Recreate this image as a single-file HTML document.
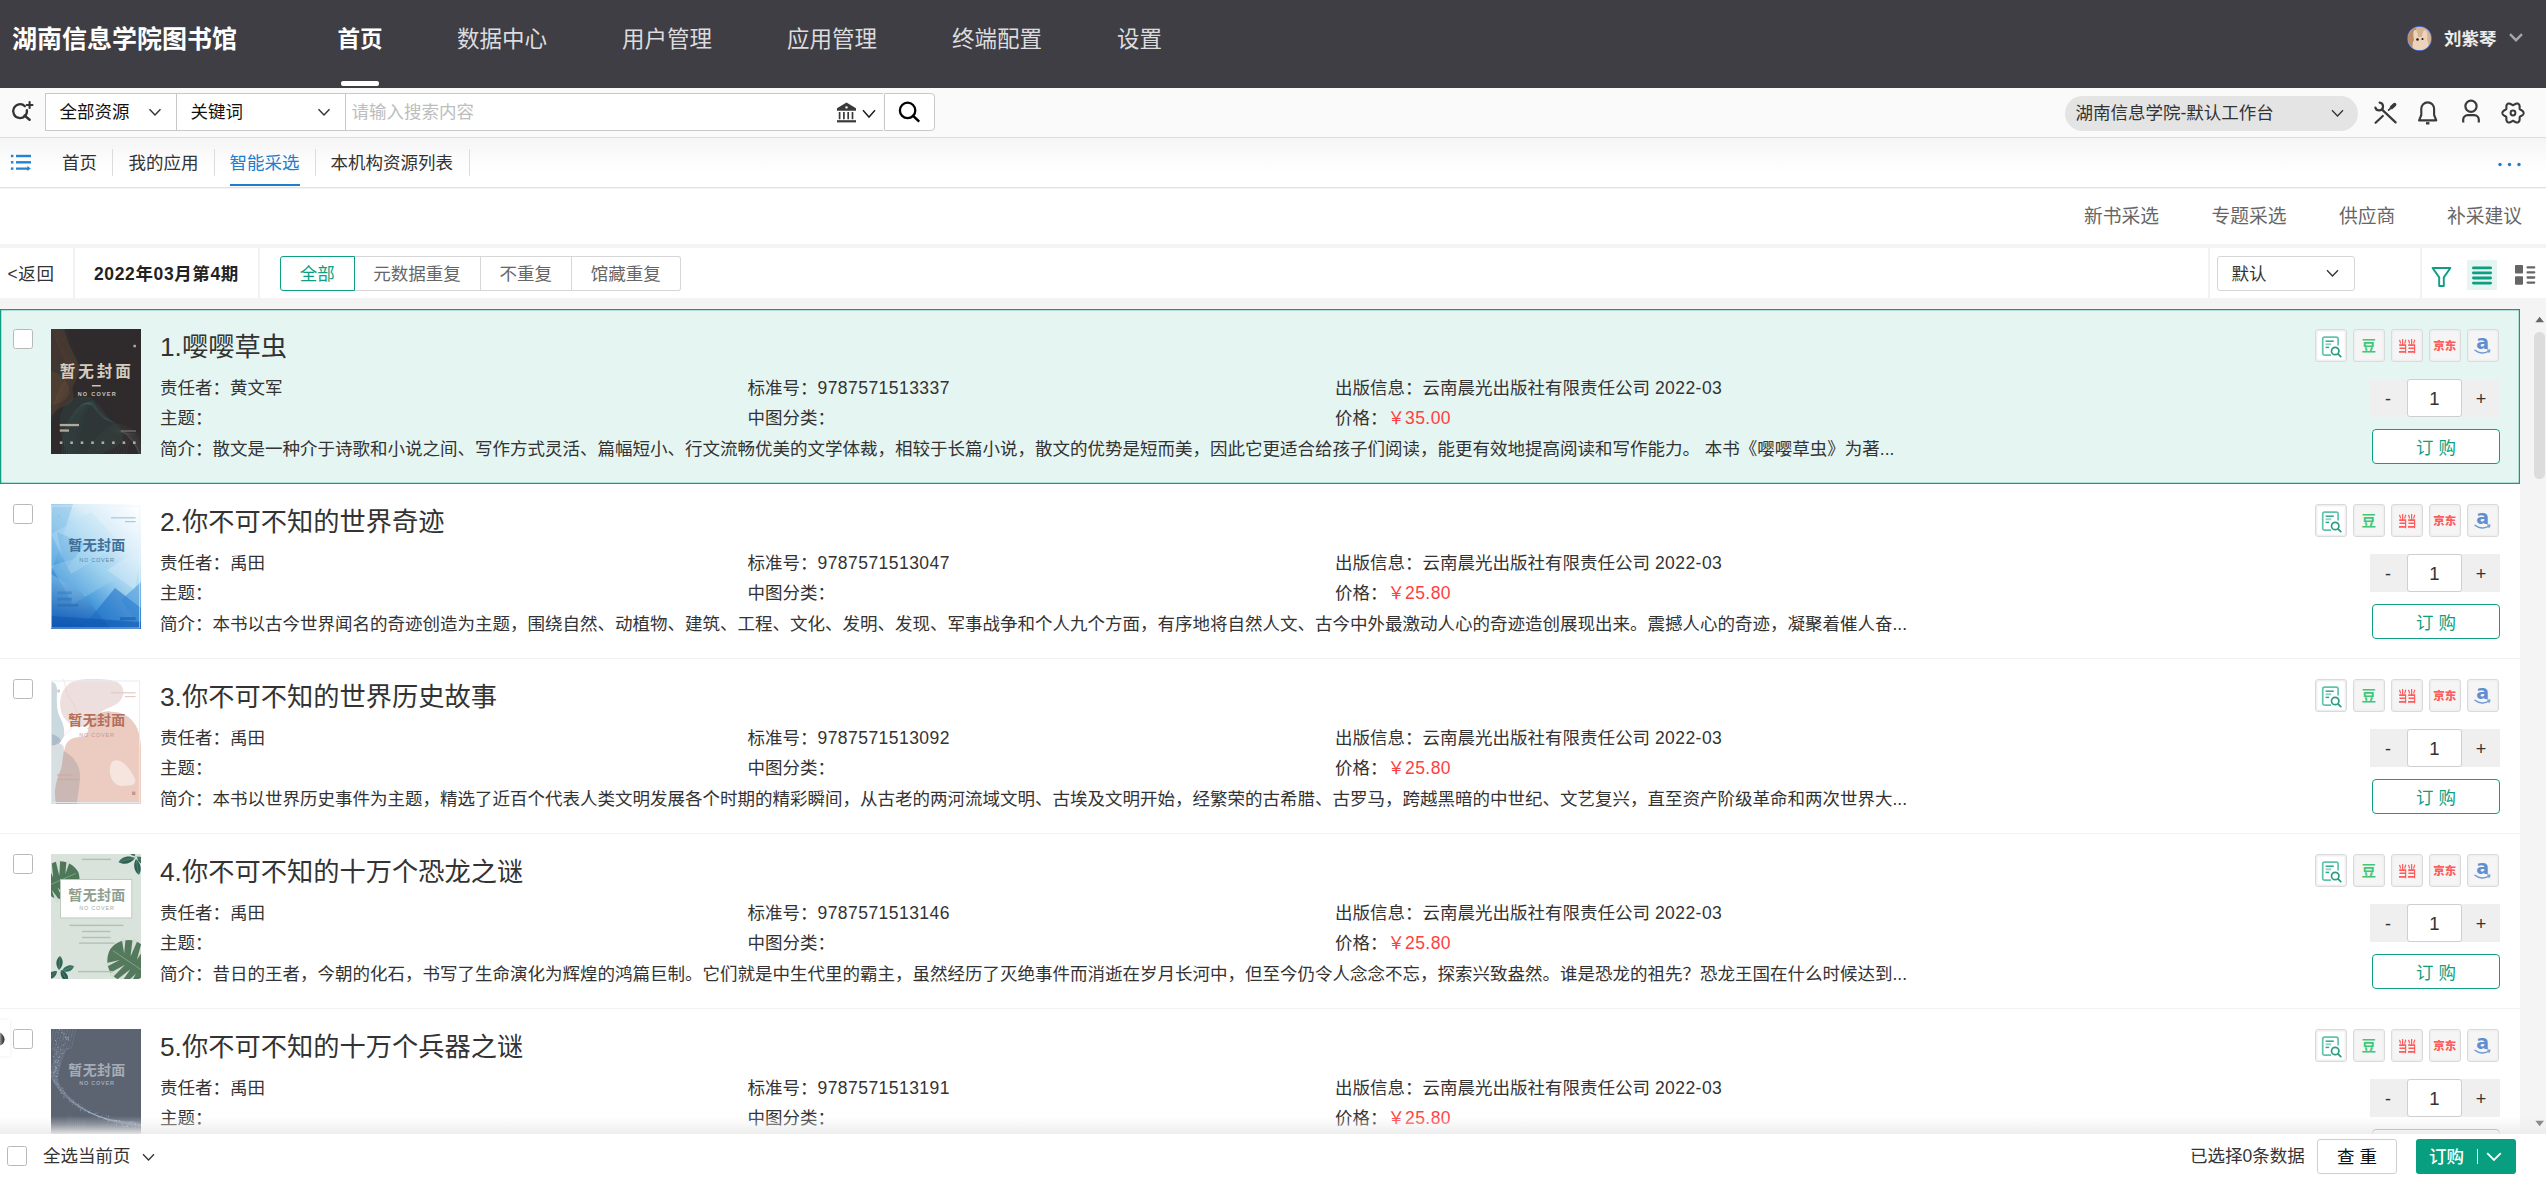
<!DOCTYPE html>
<html lang="zh-CN">
<head>
<meta charset="utf-8">
<title>湖南信息学院图书馆 - 智能采选</title>
<style>
*{box-sizing:border-box;margin:0;padding:0}
html,body{width:2546px;height:1179px;overflow:hidden}
body{position:relative;background:#f4f4f4;font-family:"Liberation Sans","Noto Sans CJK SC",sans-serif;font-size:17.5px;color:#333;line-height:1}
.abs{position:absolute}
svg{display:block;overflow:visible}
/* ---------- header ---------- */
#hdr{position:absolute;left:0;top:0;width:2546px;height:87.5px;background:#3f3e45}
#logo{position:absolute;left:12px;top:22px;font-size:25px;font-weight:700;color:#fff;line-height:35px;white-space:nowrap;letter-spacing:0}
.nav{position:absolute;top:23px;font-size:22.5px;line-height:34px;color:#dcdcde;white-space:nowrap}
.nav.on{color:#fff;font-weight:700}
#navline{position:absolute;left:341px;top:81px;width:37.5px;height:5px;border-radius:2px;background:#fff}
#avatar{position:absolute;left:2407px;top:26px;width:25px;height:25px;border-radius:50%;border:1.3px solid #4a7bff;background:radial-gradient(circle at 45% 55%,#e9cdb4 0,#d9b594 45%,#b98f6c 100%);overflow:hidden}
#uname{position:absolute;left:2444px;top:27px;font-size:17.5px;font-weight:700;color:#ececec;line-height:25px;white-space:nowrap}
/* ---------- search bar ---------- */
#sbar{position:absolute;left:0;top:87.5px;width:2546px;height:50px;background:#fafafa;border-bottom:1.25px solid #dcdcdc}
#sbox{position:absolute;left:45px;top:5.5px;width:838px;height:38px;background:#fff;border:1.25px solid #c9c9c9;border-right:0}
#sbox .sep{position:absolute;top:0;width:1.25px;height:100%;background:#c9c9c9}
#sbtn{position:absolute;left:884px;top:5.5px;width:51px;height:38px;background:#fff;border:1.25px solid #c9c9c9;border-radius:0 4px 4px 0}
.stxt{position:absolute;top:0;line-height:37.5px;color:#111;white-space:nowrap}
#wb{position:absolute;left:2065px;top:8.5px;width:293px;height:35px;border-radius:18px;background:#e4e4e4}
#wb span{position:absolute;left:10.5px;top:0;line-height:35.5px;color:#333;white-space:nowrap}
/* ---------- tabs ---------- */
#tabs{position:absolute;left:0;top:137.5px;width:2546px;height:50px;background:linear-gradient(#f5f5f5,#fcfcfc 45%,#fff 75%);border-bottom:1.25px solid #d9e3ee}
.tab{position:absolute;top:0;line-height:51px;color:#333;white-space:nowrap}
.tab.on{color:#1f7dcd}
.tsep{position:absolute;top:11px;width:1.25px;height:27px;background:#dcdcdc}
#tabline{position:absolute;left:229.5px;top:46px;width:70.5px;height:2.5px;background:#1f7dcd}
/* ---------- sub nav ---------- */
#sub{position:absolute;left:0;top:188.5px;width:2546px;height:55.5px;background:#fff}
#sub span{position:absolute;top:0;line-height:56px;font-size:18.75px;color:#666;white-space:nowrap}
/* ---------- toolbar ---------- */
#tool{position:absolute;left:0;top:247.5px;width:2546px;height:50.5px;background:#fff}
.vsep{position:absolute;top:0;width:2.5px;height:100%;background:#f2f1f6}
#tool .t{position:absolute;top:0;line-height:53px;white-space:nowrap;color:#333}
#bg{position:absolute;left:280px;top:8.5px;height:35px;display:flex}
#bg div{height:35px;line-height:34.5px;padding:0;text-align:center;border:1.25px solid #d6d6d6;border-left-width:0;color:#666;white-space:nowrap;background:#fff}
#bg div:first-child{border:1.25px solid #0e9f82;color:#0e9f82;border-radius:3px 0 0 3px}
#bg div:last-child{border-radius:0 3px 3px 0}
#sort{position:absolute;left:2217px;top:8.5px;width:137.5px;height:34.5px;border:1.25px solid #d6d6d6;border-radius:3px;background:#fff}
#sort span{position:absolute;left:13.5px;top:0;line-height:34px;color:#333}

/* ---------- list ---------- */
#list{position:absolute;left:0;top:309px;width:2520px;height:826px;background:#fff;overflow:hidden}
.item{position:absolute;left:0;width:2520px;height:175px;border-bottom:1.25px solid #f2f2f2;background:#fff}
.item.sel{background:#e5f5f2;border-bottom:0;box-shadow:inset 0 0 0 1.25px #0e9f82}
.cb{position:absolute;left:13px;top:19.7px;width:20px;height:20px;border:1.25px solid #b9b9b9;border-radius:2.5px;background:#fff}
.cover{position:absolute;left:51px;top:19.7px;width:90px;height:125px;overflow:hidden}
.ti{position:absolute;left:160px;top:20px;font-size:26.25px;line-height:36px;color:#333;white-space:nowrap}
.r{position:absolute;line-height:30px;white-space:nowrap;color:#333}
.r1{top:64px}.r2{top:94px}.r3{top:124.5px}
.pr{color:#ff4040}
.d{letter-spacing:.45px}
.ib{position:absolute;top:20.2px;width:31.7px;height:33px;border:1.25px solid #dadada;border-radius:3px;background:#f5f5f5;box-shadow:inset 0 0 0 1.4px #efefef}
.i1{left:2315.2px;background:#fff}.i2{left:2353.2px}.i3{left:2391.1px}.i4{left:2429.2px}.i5{left:2467.2px;width:32.3px}
.i1 svg{position:absolute;left:4.6px;top:5.8px}
.dou{position:absolute;left:0;top:1.9px;width:29.2px;text-align:center;font-size:14.5px;font-weight:700;line-height:28px;color:#3fc878}
.dd{position:absolute;left:-5.4px;top:2px;width:40px;text-align:center;font-size:14px;font-weight:700;line-height:28px;color:#ff5c5c;transform:scaleX(.66);letter-spacing:-0.5px}
.jd{position:absolute;left:-3.4px;top:1.8px;width:36px;text-align:center;font-size:11.5px;font-weight:900;line-height:29px;color:#ff5c5c;letter-spacing:0}
.am{position:absolute;left:0;top:-2.5px;width:29.2px;text-align:center;font-size:19px;font-weight:700;line-height:28px;color:#5f8fd2;font-family:"DejaVu Sans","Liberation Sans",sans-serif}
.sm{position:absolute;left:6px;top:18.5px}
.step{position:absolute;left:2370px;top:70px;width:130px;height:38px;background:#efefef}
.step .mi,.step .pl{position:absolute;top:0;line-height:40px;font-size:18px;color:#333;width:30px;text-align:center}
.step .mi{left:3px}.step .pl{left:96px}
.qty{position:absolute;left:37px;top:0;width:55px;height:38px;border:1.25px solid #cfcfcf;border-radius:3px;background:#fff;text-align:center;line-height:38px;font-size:18.5px;color:#333}
.buy{position:absolute;left:2372px;top:120px;width:128px;height:35px;border:1.6px solid #0e9f82;border-radius:4px;background:#fff;color:#0e9f82;text-align:center;line-height:37px;white-space:pre}
/* scrollbar */
#sthumb{position:absolute;left:2534px;top:332px;width:11px;height:147px;border-radius:6px;background:#dcdcdc}
/* ---------- bottom ---------- */
#bshadow{position:absolute;left:0;top:1116px;width:2546px;height:18px;background:linear-gradient(rgba(236,236,236,0),rgba(236,236,236,.35) 45%,rgba(236,236,236,.93))}
#bot{position:absolute;left:0;top:1134px;width:2546px;height:45px;background:#fff}
#bot .cb2{position:absolute;left:7px;top:12px;width:20px;height:20px;border:1.25px solid #b9b9b9;border-radius:2.5px;background:#fff}
#bot .t{position:absolute;top:0;line-height:45px;white-space:nowrap;color:#333}
#dup{position:absolute;left:2317px;top:5px;width:80px;height:34.6px;border:1.25px solid #cfcfcf;border-radius:3px;background:#fff;text-align:center;line-height:35px;color:#111;white-space:pre}
#order{position:absolute;left:2416px;top:5px;width:100px;height:34.6px;border-radius:3px;background:#089f80;color:#fff}
#order span{position:absolute;left:13px;top:0;line-height:37.5px;font-weight:500}
</style>
</head>
<body>

<!-- ================= HEADER ================= -->
<div id="hdr">
  <div id="logo">湖南信息学院图书馆</div>
  <div class="nav on" style="left:337.5px">首页</div>
  <div class="nav" style="left:457px">数据中心</div>
  <div class="nav" style="left:622px">用户管理</div>
  <div class="nav" style="left:787px">应用管理</div>
  <div class="nav" style="left:952px">终端配置</div>
  <div class="nav" style="left:1117px">设置</div>
  <div id="navline"></div>
  <div id="avatar">
    <svg width="25" height="25" viewBox="0 0 25 25">
      <rect width="25" height="25" fill="#d6b391"/>
      <path d="M0 0h8l-1 25H0z" fill="#b98e6b"/>
      <path d="M7 3c2 0 3 4 3 7l4 0c0-3 1-7 3-7c2 0 3 6 2 10c2 3 2 9 0 12H6c-2-3-2-9 0-12C5 9 5 3 7 3z" fill="#ecd3bb"/>
      <circle cx="9.5" cy="12.5" r="1.3" fill="#2a1c14"/><circle cx="14.5" cy="12" r="1.1" fill="#2a1c14"/>
    </svg>
  </div>
  <div id="uname">刘紫琴</div>
  <svg class="abs" style="left:2509px;top:33px" width="14" height="9" viewBox="0 0 14 9"><path d="M1 1.2L7 7.2L13 1.2" fill="none" stroke="#a6a6ab" stroke-width="2.4"/></svg>
</div>

<!-- ================= SEARCH BAR ================= -->
<div id="sbar">
  <svg class="abs" style="left:10px;top:10.7px" width="26" height="26" viewBox="0 0 26 26">
    <path d="M14.9 8.2A6.9 6.9 0 1 0 16.9 12.2" fill="none" stroke="#333" stroke-width="2.3" stroke-linecap="round"/>
    <path d="M14.6 17.6L19.6 21.8" stroke="#333" stroke-width="2.5" stroke-linecap="round"/>
    <path d="M16.7 7h5.8M19.6 4.1v5.8" stroke="#333" stroke-width="2.1" stroke-linecap="round"/>
  </svg>
  <div id="sbox">
    <span class="stxt" style="left:13.5px">全部资源</span>
    <svg class="abs" style="left:102px;top:14px" width="14" height="9" viewBox="0 0 14 9"><path d="M1.5 1.2L7 7L12.5 1.2" fill="none" stroke="#333" stroke-width="1.4"/></svg>
    <div class="sep" style="left:130px"></div>
    <span class="stxt" style="left:144.5px">关键词</span>
    <svg class="abs" style="left:271px;top:14px" width="14" height="9" viewBox="0 0 14 9"><path d="M1.5 1.2L7 7L12.5 1.2" fill="none" stroke="#333" stroke-width="1.4"/></svg>
    <div class="sep" style="left:299px"></div>
    <span class="stxt" style="left:305.5px;color:#bdbdbd">请输入搜索内容</span>
    <!-- bank icon -->
    <svg class="abs" style="left:790.4px;top:8px" width="21" height="21" viewBox="0 0 21 21">
      <path d="M10.5 0.6L20 6.2V8.8H1V6.2z" fill="#3a3a3a"/>
      <rect x="9.4" y="4.4" width="2.2" height="2" fill="#fff"/>
      <path d="M3.6 10v7.2M7.9 10v7.2M12.2 10v7.2M16.5 10v7.2" stroke="#3a3a3a" stroke-width="1.7"/>
      <rect x="1" y="18.2" width="19" height="2.2" fill="#3a3a3a"/>
    </svg>
    <svg class="abs" style="left:816px;top:15px" width="14" height="10" viewBox="0 0 14 10"><path d="M1 1.2L7 8L13 1.2" fill="none" stroke="#222" stroke-width="1.5"/></svg>
  </div>
  <div id="sbtn">
    <svg class="abs" style="left:11px;top:5px" width="28" height="28" viewBox="0 0 28 28"><circle cx="11.6" cy="11.4" r="7.7" fill="none" stroke="#000" stroke-width="2.3"/><path d="M17.2 17L22.3 21.7" stroke="#000" stroke-width="2.5" stroke-linecap="square"/></svg>
  </div>
  <div id="wb"><span>湖南信息学院-默认工作台</span>
    <svg class="abs" style="left:266px;top:13px" width="13" height="9" viewBox="0 0 13 9"><path d="M1 1.2L6.5 7L12 1.2" fill="none" stroke="#333" stroke-width="1.3"/></svg>
  </div>
  <!-- tools -->
  <svg class="abs" style="left:2373px;top:12px" width="26" height="26" viewBox="0 0 26 26" fill="none" stroke="#3a3a3a" stroke-width="2.2" stroke-linecap="round">
    <path d="M6.6 2.6A3.9 3.9 0 1 1 2.4 7.6"/><path d="M8.8 9.4L22.6 22.4"/><path d="M2.6 22.8L9.8 16"/><path d="M15.6 10.2L18.6 7.4" stroke-width="1.7"/><path d="M18.6 7.4L21.6 4.6" stroke-width="3.6"/>
  </svg>
  <!-- bell -->
  <svg class="abs" style="left:2415px;top:12px" width="26" height="26" viewBox="0 0 26 26" fill="none" stroke="#3a3a3a" stroke-width="2.1" stroke-linejoin="round">
    <path d="M6.3 8.8a6.4 6.4 0 0 1 12.8 0v6.2l2.2 5.4H4.1l2.2-5.4z"/><path d="M11 23.3h3.4" stroke-width="2.4"/>
  </svg>
  <!-- user -->
  <svg class="abs" style="left:2458px;top:10px" width="26" height="26" viewBox="0 0 26 26" fill="none" stroke="#3a3a3a" stroke-width="2.2">
    <circle cx="13" cy="8.2" r="5.6"/><path d="M5.2 24.4v-2.6a4.6 4.6 0 0 1 4.6-4.6h6.4a4.6 4.6 0 0 1 4.6 4.6v2.6"/>
  </svg>
  <!-- gear -->
  <svg class="abs" style="left:2500px;top:12.3px" width="26" height="26" viewBox="-13 -13 26 26" fill="none" stroke="#3a3a3a" stroke-width="2.1" stroke-linejoin="round">
    <path d="M10.60 0.00L10.55 0.46L10.40 0.91L10.16 1.34L9.84 1.74L9.46 2.10L9.03 2.42L8.59 2.71L8.14 2.96L7.71 3.19L7.32 3.42L7.00 3.64L6.75 3.90L6.65 4.24L6.62 4.64L6.62 5.08L6.64 5.57L6.64 6.08L6.61 6.61L6.55 7.14L6.42 7.65L6.24 8.13L5.99 8.55L5.67 8.91L5.30 9.18L4.88 9.37L4.41 9.46L3.92 9.47L3.42 9.39L2.91 9.24L2.42 9.03L1.95 8.79L1.50 8.53L1.09 8.28L0.70 8.05L0.34 7.88L0.00 7.80L-0.34 7.88L-0.70 8.05L-1.09 8.28L-1.50 8.53L-1.95 8.79L-2.42 9.03L-2.91 9.24L-3.42 9.39L-3.92 9.47L-4.41 9.46L-4.88 9.37L-5.30 9.18L-5.67 8.91L-5.99 8.55L-6.24 8.13L-6.42 7.65L-6.55 7.14L-6.61 6.61L-6.64 6.08L-6.64 5.57L-6.62 5.08L-6.62 4.64L-6.65 4.24L-6.75 3.90L-7.00 3.64L-7.32 3.42L-7.71 3.19L-8.14 2.96L-8.59 2.71L-9.03 2.42L-9.46 2.10L-9.84 1.74L-10.16 1.34L-10.40 0.91L-10.55 0.46L-10.60 0.00L-10.55 -0.46L-10.40 -0.91L-10.16 -1.34L-9.84 -1.74L-9.46 -2.10L-9.03 -2.42L-8.59 -2.71L-8.14 -2.96L-7.71 -3.19L-7.32 -3.42L-7.00 -3.64L-6.75 -3.90L-6.65 -4.24L-6.62 -4.64L-6.62 -5.08L-6.64 -5.57L-6.64 -6.08L-6.61 -6.61L-6.55 -7.14L-6.42 -7.65L-6.24 -8.13L-5.99 -8.55L-5.67 -8.91L-5.30 -9.18L-4.88 -9.37L-4.41 -9.46L-3.92 -9.47L-3.42 -9.39L-2.91 -9.24L-2.42 -9.03L-1.95 -8.79L-1.50 -8.53L-1.09 -8.28L-0.70 -8.05L-0.34 -7.88L-0.00 -7.80L0.34 -7.88L0.70 -8.05L1.09 -8.28L1.50 -8.53L1.95 -8.79L2.42 -9.03L2.91 -9.24L3.42 -9.39L3.92 -9.47L4.41 -9.46L4.88 -9.37L5.30 -9.18L5.67 -8.91L5.99 -8.55L6.24 -8.13L6.42 -7.65L6.55 -7.14L6.61 -6.61L6.64 -6.08L6.64 -5.57L6.62 -5.08L6.62 -4.64L6.65 -4.24L6.75 -3.90L7.00 -3.64L7.32 -3.42L7.71 -3.19L8.14 -2.96L8.59 -2.71L9.03 -2.42L9.46 -2.10L9.84 -1.74L10.16 -1.34L10.40 -0.91L10.55 -0.46Z"/>
    <circle cx="0" cy="0" r="2.4" stroke-width="2"/>
  </svg>
</div>

<!-- ================= TABS ================= -->
<div id="tabs">
  <svg class="abs" style="left:10px;top:15.6px" width="22" height="18" viewBox="0 0 22 18" fill="#2583d3">
    <rect x="0.9" y="1.8" width="2.5" height="2.4"/><rect x="6" y="1.8" width="15" height="2.4"/>
    <rect x="0.9" y="8.1" width="2.5" height="2.4"/><rect x="6" y="8.1" width="15" height="2.4"/>
    <rect x="0.9" y="14.4" width="2.5" height="2.4"/><path d="M6 14.4h11.4v-1.3l3.4 2.5l-3.4 2.5v-1.3H6z"/>
  </svg>
  <span class="tab" style="left:62px">首页</span><div class="tsep" style="left:112px"></div>
  <span class="tab" style="left:128.5px">我的应用</span><div class="tsep" style="left:214px"></div>
  <span class="tab on" style="left:229.5px">智能采选</span><div class="tsep" style="left:315px"></div>
  <span class="tab" style="left:330.5px">本机构资源列表</span><div class="tsep" style="left:469px"></div>
  <div id="tabline"></div>
  <svg class="abs" style="left:2497px;top:24px" width="26" height="5" viewBox="0 0 26 5" fill="#1f7dcd"><circle cx="3" cy="2.5" r="1.7"/><circle cx="12.5" cy="2.5" r="1.7"/><circle cx="22" cy="2.5" r="1.7"/></svg>
</div>

<!-- ================= SUB NAV ================= -->
<div id="sub">
  <span style="left:2084px">新书采选</span>
  <span style="left:2211.5px">专题采选</span>
  <span style="left:2339px">供应商</span>
  <span style="left:2447px">补采建议</span>
</div>

<!-- ================= TOOLBAR ================= -->
<div id="tool">
  <span class="t" style="left:7.5px;letter-spacing:.6px">&lt;返回</span>
  <div class="vsep" style="left:72.5px"></div>
  <span class="t" style="left:94px;font-weight:700;color:#222;letter-spacing:.62px">2022年03月第4期</span>
  <div class="vsep" style="left:257.5px"></div>
  <div id="bg"><div style="width:74.6px">全部</div><div style="width:126px">元数据重复</div><div style="width:91.5px">不重复</div><div style="width:108.5px">馆藏重复</div></div>
  <div class="vsep" style="left:2207.5px"></div>
  <div id="sort"><span>默认</span>
    <svg class="abs" style="left:108px;top:12px" width="13" height="9" viewBox="0 0 13 9"><path d="M1 1.2L6.5 7L12 1.2" fill="none" stroke="#333" stroke-width="1.3"/></svg>
  </div>
  <div class="vsep" style="left:2419.5px"></div>
  <!-- filter -->
  <svg class="abs" style="left:2431px;top:18px" width="21" height="22" viewBox="0 0 21 22" fill="none" stroke="#0e9f82" stroke-width="1.9" stroke-linejoin="round"><path d="M1.6 2h17.8l-6.6 9.4v8.6h-4.6v-8.6z"/></svg>
  <!-- list view (active) -->
  <div class="abs" style="left:2467px;top:12.5px;width:30px;height:30px;background:#e6f5f2"></div>
  <svg class="abs" style="left:2472px;top:18px" width="20" height="19" viewBox="0 0 20 19" stroke="#0e9f82" stroke-width="2.8" stroke-linecap="round"><path d="M1.4 1.9h17.2M1.4 6.95h17.2M1.4 12h17.2M1.4 17.1h17.2"/></svg>
  <!-- grid view -->
  <svg class="abs" style="left:2515px;top:17.5px" width="21" height="20" viewBox="0 0 21 20"><rect x="0" y="0" width="8" height="8.5" rx="0.8" fill="#666"/><rect x="0" y="11.3" width="8" height="8.5" rx="0.8" fill="#666"/><path d="M12.6 2.4h6.6M12.6 7.4h6.6M12.6 12.5h6.6M12.6 17.6h6.6" stroke="#666" stroke-width="2.3" stroke-linecap="round"/></svg>
</div>

<!--LIST-->
<div id="list">
<div class="item sel" style="top:0px">
  <div class="cb"></div>
  <div class="cover c1"><svg width="90" height="125" viewBox="0 0 90 125"><rect width="90" height="125" fill="#2f2b2d"/><path d="M0 0H13C16 8 18 16 22 24C26 32 30 36 28 44C26 52 20 56 22 64C24 70 20 76 12 78C6 80 2 84 0 88z" fill="#5b4535" opacity=".42"/><path d="M0 42C8 44 14 50 18 58C20 64 16 72 8 74L0 76z" fill="#6a4f38" opacity=".35"/><path d="M2.0 0C6.0 12 10.0 22 14.0 30C18.0 40 16.0 50 10.0 58C6.0 66 4.0 74 0 80.0" fill="none" stroke="#8a6848" stroke-width="0.35" opacity="0.50"/><path d="M4.2 0C8.2 12 12.2 22 15.8 30C19.3 40 17.1 50 11.3 58C7.1 66 4.9 74 0 82.2" fill="none" stroke="#8a6848" stroke-width="0.35" opacity="0.45"/><path d="M6.4 0C10.4 12 14.4 22 17.5 30C20.6 40 18.2 50 12.6 58C8.2 66 5.8 74 0 84.4" fill="none" stroke="#8a6848" stroke-width="0.35" opacity="0.40"/><path d="M8.6 0C12.6 12 16.6 22 19.3 30C22.0 40 19.3 50 14.0 58C9.3 66 6.6 74 0 86.6" fill="none" stroke="#8a6848" stroke-width="0.35" opacity="0.35"/><path d="M10.8 0C14.8 12 18.8 22 21.0 30C23.3 40 20.4 50 15.3 58C10.4 66 7.5 74 0 88.8" fill="none" stroke="#8a6848" stroke-width="0.35" opacity="0.30"/><path d="M13.0 0C17.0 12 21.0 22 22.8 30C24.6 40 21.5 50 16.6 58C11.5 66 8.4 74 0 91.0" fill="none" stroke="#8a6848" stroke-width="0.35" opacity="0.25"/><path d="M15.2 0C19.2 12 23.2 22 24.6 30C25.9 40 22.6 50 17.9 58C12.6 66 9.3 74 0 93.2" fill="none" stroke="#8a6848" stroke-width="0.35" opacity="0.20"/><path d="M10 84C14 72 26 64 38 68C48 72 44 84 52 88C62 92 70 96 72 106C74 116 60 120 50 125H16C12 112 6 98 10 84z" fill="#2f5250" opacity=".28"/><path d="M12.0 125C10.0 108.0 16.0 88.0 30.0 76.0C42.0 70.0 44.0 84.0 54.0 90.0" fill="none" stroke="#4f8580" stroke-width="0.35" opacity="0.55"/><path d="M13.8 125C11.8 107.5 17.8 87.1 31.4 75.5C43.1 70.7 44.9 84.5 55.3 90.5" fill="none" stroke="#4f8580" stroke-width="0.35" opacity="0.52"/><path d="M15.6 125C13.6 106.9 19.6 86.2 32.9 74.9C44.2 71.4 45.8 85.1 56.5 91.1" fill="none" stroke="#4f8580" stroke-width="0.35" opacity="0.48"/><path d="M17.4 125C15.4 106.4 21.4 85.3 34.3 74.4C45.2 72.2 46.7 85.6 57.8 91.6" fill="none" stroke="#4f8580" stroke-width="0.35" opacity="0.45"/><path d="M19.2 125C17.2 105.8 23.2 84.4 35.8 73.8C46.3 72.9 47.6 86.2 59.0 92.2" fill="none" stroke="#4f8580" stroke-width="0.35" opacity="0.41"/><path d="M21.0 125C19.0 105.3 25.0 83.5 37.2 73.3C47.4 73.6 48.5 86.7 60.3 92.7" fill="none" stroke="#4f8580" stroke-width="0.35" opacity="0.38"/><path d="M22.8 125C20.8 104.8 26.8 82.6 38.6 72.8C48.5 74.3 49.4 87.2 61.6 93.2" fill="none" stroke="#4f8580" stroke-width="0.35" opacity="0.34"/><path d="M24.6 125C22.6 104.2 28.6 81.7 40.1 72.2C49.6 75.0 50.3 87.8 62.8 93.8" fill="none" stroke="#4f8580" stroke-width="0.35" opacity="0.31"/><path d="M26.4 125C24.4 103.7 30.4 80.8 41.5 71.7C50.6 75.8 51.2 88.3 64.1 94.3" fill="none" stroke="#4f8580" stroke-width="0.35" opacity="0.27"/><path d="M28.2 125C26.2 103.1 32.2 79.9 43.0 71.1C51.7 76.5 52.1 88.9 65.3 94.9" fill="none" stroke="#4f8580" stroke-width="0.35" opacity="0.23"/><path d="M36.0 125C44.0 112.0 52.0 100.0 62.0 96.0S84.0 104.0 92 108.0" fill="none" stroke="#8a8f8c" stroke-width="0.3" opacity=".38"/><path d="M38.6 125C46.3 111.5 54.1 99.7 63.8 97.3S84.5 106.6 92 110.6" fill="none" stroke="#8a8f8c" stroke-width="0.3" opacity=".38"/><path d="M41.2 125C48.7 111.0 56.2 99.5 65.6 98.6S85.0 109.2 92 113.2" fill="none" stroke="#8a8f8c" stroke-width="0.3" opacity=".38"/><path d="M43.8 125C51.0 110.4 58.2 99.2 67.5 99.9S85.6 111.8 92 115.8" fill="none" stroke="#8a8f8c" stroke-width="0.3" opacity=".38"/><path d="M46.4 125C53.4 109.9 60.3 99.0 69.3 101.2S86.1 114.4 92 118.4" fill="none" stroke="#8a8f8c" stroke-width="0.3" opacity=".38"/><path d="M49.0 125C55.7 109.4 62.4 98.7 71.1 102.5S86.6 117.0 92 121.0" fill="none" stroke="#8a8f8c" stroke-width="0.3" opacity=".38"/><path d="M51.6 125C58.0 108.9 64.5 98.4 72.9 103.8S87.1 119.6 92 123.6" fill="none" stroke="#8a8f8c" stroke-width="0.3" opacity=".38"/><path d="M54.2 125C60.4 108.4 66.6 98.2 74.7 105.1S87.6 122.2 92 126.2" fill="none" stroke="#8a8f8c" stroke-width="0.3" opacity=".38"/><path d="M56.8 125C62.7 107.8 68.6 97.9 76.6 106.4S88.2 124.8 92 128.8" fill="none" stroke="#8a8f8c" stroke-width="0.3" opacity=".38"/><path d="M59.4 125C65.1 107.3 70.7 97.7 78.4 107.7S88.7 127.4 92 131.4" fill="none" stroke="#8a8f8c" stroke-width="0.3" opacity=".38"/><path d="M62.0 125C67.4 106.8 72.8 97.4 80.2 109.0S89.2 130.0 92 134.0" fill="none" stroke="#8a8f8c" stroke-width="0.3" opacity=".38"/><path d="M64.6 125C69.7 106.3 74.9 97.1 82.0 110.3S89.7 132.6 92 136.6" fill="none" stroke="#8a8f8c" stroke-width="0.3" opacity=".38"/><path d="M67.2 125C72.1 105.8 77.0 96.9 83.8 111.6S90.2 135.2 92 139.2" fill="none" stroke="#8a8f8c" stroke-width="0.3" opacity=".38"/><path d="M69.8 125C74.4 105.2 79.0 96.6 85.7 112.9S90.8 137.8 92 141.8" fill="none" stroke="#8a8f8c" stroke-width="0.3" opacity=".38"/><path d="M72.4 125C76.8 104.7 81.1 96.4 87.5 114.2S91.3 140.4 92 144.4" fill="none" stroke="#8a8f8c" stroke-width="0.3" opacity=".38"/><path d="M75.0 125C79.1 104.2 83.2 96.1 89.3 115.5S91.8 143.0 92 147.0" fill="none" stroke="#8a8f8c" stroke-width="0.3" opacity=".38"/><text x="45.8" y="47.9" font-size="15.6" font-weight="700" fill="#d6cbbd" letter-spacing="2.9" text-anchor="middle" font-family="Liberation Sans, Noto Sans CJK SC, sans-serif" >暂无封面</text><rect x="40.9" y="56" width="8.9" height="1.5" fill="#cfc4b6"/><text x="46.3" y="66.8" font-size="5.5" font-weight="700" fill="#cdc3b6" letter-spacing="1.25" text-anchor="middle" font-family="Liberation Sans, Noto Sans CJK SC, sans-serif" >NO COVER</text><rect x="8.8" y="94.9" width="19.2" height="2.3" fill="#b3a99d"/><rect x="8.8" y="100.4" width="9.2" height="2.3" fill="#b3a99d"/><rect x="69.9" y="101.5" width="15.1" height="1" fill="#8f877e"/><rect x="8.8" y="112.4" width="2.6" height="2.6" fill="#b5aa9c"/><rect x="19.3" y="112.4" width="2.6" height="2.6" fill="#b5aa9c"/><rect x="29.7" y="112.4" width="2.6" height="2.6" fill="#b5aa9c"/><rect x="40.2" y="112.4" width="2.6" height="2.6" fill="#b5aa9c"/><rect x="50.6" y="112.4" width="2.6" height="2.6" fill="#b5aa9c"/><rect x="61.1" y="112.4" width="2.6" height="2.6" fill="#b5aa9c"/><rect x="71.6" y="112.4" width="2.6" height="2.6" fill="#b5aa9c"/><rect x="82.0" y="112.4" width="2.6" height="2.6" fill="#b5aa9c"/><rect x="82.4" y="15.8" width="2.5" height="2.5" fill="#b5aa9c"/></svg></div>
  <div class="ti">1.嘤嘤草虫</div>
  <div class="r r1" style="left:160px">责任者：黄文军</div>
  <div class="r r1" style="left:747.5px">标准号：<span class="d">9787571513337</span></div>
  <div class="r r1" style="left:1335px">出版信息：云南晨光出版社有限责任公司 <span class="d">2022-03</span></div>
  <div class="r r2" style="left:160px">主题：</div>
  <div class="r r2" style="left:747.5px">中图分类：</div>
  <div class="r r2" style="left:1335px">价格：<span class="pr">￥<span class="d">35.00</span></span></div>
  <div class="r r3" style="left:160px">简介：散文是一种介于诗歌和小说之间、写作方式灵活、篇幅短小、行文流畅优美的文学体裁，相较于长篇小说，散文的优势是短而美，因此它更适合给孩子们阅读，能更有效地提高阅读和写作能力。 本书《嘤嘤草虫》为著...</div>
  <div class="ib i1"><svg width="21" height="21" viewBox="0 0 21 21" fill="none"><path d="M10 19.2H3.6A1.9 1.9 0 0 1 1.7 17.3V3.1A1.9 1.9 0 0 1 3.6 1.2H15.2A1.9 1.9 0 0 1 17.1 3.1V9.4" stroke="#62c3ab" stroke-width="1.7"/><path d="M4.6 5.2H12.8" stroke="#2fa78c" stroke-width="1.5"/><path d="M4.6 8.3H10.2" stroke="#8ed3c1" stroke-width="1.9"/><path d="M4.6 11.4H8.2" stroke="#2fa78c" stroke-width="1.5"/><circle cx="14.2" cy="15" r="3.7" stroke="#2a9d84" stroke-width="1.7"/><path d="M17 17.9L19.8 20.6" stroke="#2a9d84" stroke-width="1.8" stroke-linecap="round"/></svg></div><div class="ib i2"><span class="dou">豆</span></div><div class="ib i3"><span class="dd">当当</span></div><div class="ib i4"><span class="jd">京东</span></div><div class="ib i5"><span class="am">a</span><svg class="sm" width="17" height="6" viewBox="0 0 17 6" fill="none"><path d="M1 1.2C5 4.6 11 4.8 15.2 2" stroke="#6f9ad6" stroke-width="1.5" stroke-linecap="round"/><path d="M13.4 0.9L16 1.3L15 3.6" stroke="#6f9ad6" stroke-width="1.1" stroke-linecap="round"/></svg></div>
  <div class="step"><span class="mi">-</span><div class="qty">1</div><span class="pl">+</span></div>
  <div class="buy">订 购</div>
</div>
<div class="item" style="top:175px">
  <div class="cb"></div>
  <div class="cover c2"><svg width="90" height="125" viewBox="0 0 90 125"><defs><linearGradient id="g2" x1="0.9" y1="0" x2="0.25" y2="1"><stop offset="0" stop-color="#fdfeff"/><stop offset=".28" stop-color="#d9edf8"/><stop offset=".52" stop-color="#9dd0ee"/><stop offset=".75" stop-color="#4a9bdb"/><stop offset="1" stop-color="#1460bb"/></linearGradient><linearGradient id="g2b" x1="0" y1="0" x2="0" y2="1"><stop offset="0" stop-color="#8cc6ea" stop-opacity=".55"/><stop offset="1" stop-color="#0d58b4" stop-opacity=".75"/></linearGradient></defs><rect width="90" height="125" fill="url(#g2)"/><path d="M0 0H22L0 70z" fill="#7ebde6" opacity=".45"/><path d="M0 30L40 8L70 40L20 70z" fill="#bfe1f5" opacity=".35"/><path d="M6 28L34 40L14 66z" fill="#5aa6dd" opacity=".3"/><path d="M0 62L38 50L66 74L22 100z" fill="#a5d6f1" opacity=".35"/><path d="M90 44L56 66L84 86z" fill="#e1f2fb" opacity=".35"/><path d="M0 70V125H60L30 88z" fill="url(#g2b)"/><path d="M30 125L64 84L90 104V125z" fill="#1b6cc4" opacity=".55"/><path d="M90 78L70 96L90 125z" fill="#2f86d2" opacity=".45"/><path d="M0 112L90 118V125H0z" fill="#0c54b0" opacity=".55"/><rect x="0.5" y="2" width="88" height="122" fill="none" stroke="#e9f3fa" stroke-width="0.8" opacity=".7"/><text x="46" y="45.6" font-size="14" font-weight="700" fill="#3f7099" letter-spacing="0.35" text-anchor="middle" font-family="Liberation Sans, Noto Sans CJK SC, sans-serif" >暂无封面</text><text x="46" y="57.6" font-size="5.5" font-weight="400" fill="#5a86a8" letter-spacing="0.75" text-anchor="middle" font-family="Liberation Sans, Noto Sans CJK SC, sans-serif" >NO COVER</text><rect x="60" y="13.2" width="24.6" height="1.2" fill="#a9c8dd"/><rect x="74" y="17" width="10.6" height="1.2" fill="#a9c8dd"/><rect x="6.3" y="10.6" width="2.8" height="2.8" fill="#9fc3dc" opacity=".8"/><rect x="6.3" y="87.5" width="14.5" height="2.8" fill="#3a7fc2" opacity=".6"/><rect x="6.3" y="93.7" width="14.5" height="2.8" fill="#2f74b9" opacity=".6"/><rect x="6.3" y="99.9" width="21" height="2.8" fill="#2a6ab0" opacity=".6"/><rect x="69" y="113.2" width="15.6" height="3" fill="#0f56ab" opacity=".55"/></svg></div>
  <div class="ti">2.你不可不知的世界奇迹</div>
  <div class="r r1" style="left:160px">责任者：禹田</div>
  <div class="r r1" style="left:747.5px">标准号：<span class="d">9787571513047</span></div>
  <div class="r r1" style="left:1335px">出版信息：云南晨光出版社有限责任公司 <span class="d">2022-03</span></div>
  <div class="r r2" style="left:160px">主题：</div>
  <div class="r r2" style="left:747.5px">中图分类：</div>
  <div class="r r2" style="left:1335px">价格：<span class="pr">￥<span class="d">25.80</span></span></div>
  <div class="r r3" style="left:160px">简介：本书以古今世界闻名的奇迹创造为主题，围绕自然、动植物、建筑、工程、文化、发明、发现、军事战争和个人九个方面，有序地将自然人文、古今中外最激动人心的奇迹造创展现出来。震撼人心的奇迹，凝聚着催人奋...</div>
  <div class="ib i1"><svg width="21" height="21" viewBox="0 0 21 21" fill="none"><path d="M10 19.2H3.6A1.9 1.9 0 0 1 1.7 17.3V3.1A1.9 1.9 0 0 1 3.6 1.2H15.2A1.9 1.9 0 0 1 17.1 3.1V9.4" stroke="#62c3ab" stroke-width="1.7"/><path d="M4.6 5.2H12.8" stroke="#2fa78c" stroke-width="1.5"/><path d="M4.6 8.3H10.2" stroke="#8ed3c1" stroke-width="1.9"/><path d="M4.6 11.4H8.2" stroke="#2fa78c" stroke-width="1.5"/><circle cx="14.2" cy="15" r="3.7" stroke="#2a9d84" stroke-width="1.7"/><path d="M17 17.9L19.8 20.6" stroke="#2a9d84" stroke-width="1.8" stroke-linecap="round"/></svg></div><div class="ib i2"><span class="dou">豆</span></div><div class="ib i3"><span class="dd">当当</span></div><div class="ib i4"><span class="jd">京东</span></div><div class="ib i5"><span class="am">a</span><svg class="sm" width="17" height="6" viewBox="0 0 17 6" fill="none"><path d="M1 1.2C5 4.6 11 4.8 15.2 2" stroke="#6f9ad6" stroke-width="1.5" stroke-linecap="round"/><path d="M13.4 0.9L16 1.3L15 3.6" stroke="#6f9ad6" stroke-width="1.1" stroke-linecap="round"/></svg></div>
  <div class="step"><span class="mi">-</span><div class="qty">1</div><span class="pl">+</span></div>
  <div class="buy">订 购</div>
</div>
<div class="item" style="top:350px">
  <div class="cb"></div>
  <div class="cover c3"><svg width="90" height="125" viewBox="0 0 90 125"><rect width="90" height="125" fill="#fff"/><path d="M19 4C30 -2 55 -1 66 3C76 8 74 22 62 27C52 31 48 33 42 42C36 50 22 50 14 40C6 30 8 12 19 4z" fill="#ecdfde"/><path d="M0 3C4 3 6 6 6 12C6 20 5 28 8 36C12 44 14 50 13 56C12 62 6 66 0 67z" fill="#cad9dd"/><path d="M0 55C6 56 10 60 10 62C8 66 4 67 0 67z" fill="#a9bcc8"/><path d="M0 67C6 66 12 62 13 70L12 125H0z" fill="#d8dfe2"/><path d="M14 125L13 80C12 64 18 58 30 58C38 58 36 50 40 42C46 32 64 30 74 36C86 42 90 56 90 70V125z" fill="#ecccc0"/><path d="M40 42C44 35 52 32 60 32C56 34 50 38 46 44C44 48 40 50 36 50C38 48 39 45 40 42z" fill="#e3c2b9" opacity=".8"/><path d="M5 125C2 110 6 100 10 90C12 82 12 74 13 72C24 78 30 88 29 100C28 112 26 120 26 125z" fill="#cbb8b4"/><path d="M62 82C70 78 80 90 84 100C86 108 76 106 70 107C62 106 58 96 59 90C59 86 60 84 62 82z" fill="#f6e4de"/><path d="M12 0C15 5 14 12 18 18C23 25 27 32 25 40C23 50 12 56 8 62C5 66 2 70 0 71" fill="none" stroke="#efc3b6" stroke-width="0.45"/><rect x="0.6" y="2" width="88" height="121.5" fill="none" stroke="#e4ecf1" stroke-width="0.9"/><text x="46" y="45.8" font-size="14" font-weight="700" fill="#b56f5c" letter-spacing="0.35" text-anchor="middle" font-family="Liberation Sans, Noto Sans CJK SC, sans-serif" >暂无封面</text><text x="46" y="57.6" font-size="5.5" font-weight="400" fill="#c4958a" letter-spacing="0.75" text-anchor="middle" font-family="Liberation Sans, Noto Sans CJK SC, sans-serif" >NO COVER</text><rect x="60" y="13.2" width="24.6" height="1.2" fill="#e2cbc6"/><rect x="74" y="17" width="10.6" height="1.2" fill="#e2cbc6"/><rect x="6.3" y="10.6" width="2.6" height="2.8" fill="#cfbcb8" opacity=".85"/><rect x="6" y="95.4" width="15" height="1.2" fill="#d2a99d"/><rect x="7" y="99.8" width="20.4" height="1.3" fill="#d2a99d"/><rect x="81" y="112.6" width="3.4" height="3.4" fill="#c9968a"/></svg></div>
  <div class="ti">3.你不可不知的世界历史故事</div>
  <div class="r r1" style="left:160px">责任者：禹田</div>
  <div class="r r1" style="left:747.5px">标准号：<span class="d">9787571513092</span></div>
  <div class="r r1" style="left:1335px">出版信息：云南晨光出版社有限责任公司 <span class="d">2022-03</span></div>
  <div class="r r2" style="left:160px">主题：</div>
  <div class="r r2" style="left:747.5px">中图分类：</div>
  <div class="r r2" style="left:1335px">价格：<span class="pr">￥<span class="d">25.80</span></span></div>
  <div class="r r3" style="left:160px">简介：本书以世界历史事件为主题，精选了近百个代表人类文明发展各个时期的精彩瞬间，从古老的两河流域文明、古埃及文明开始，经繁荣的古希腊、古罗马，跨越黑暗的中世纪、文艺复兴，直至资产阶级革命和两次世界大...</div>
  <div class="ib i1"><svg width="21" height="21" viewBox="0 0 21 21" fill="none"><path d="M10 19.2H3.6A1.9 1.9 0 0 1 1.7 17.3V3.1A1.9 1.9 0 0 1 3.6 1.2H15.2A1.9 1.9 0 0 1 17.1 3.1V9.4" stroke="#62c3ab" stroke-width="1.7"/><path d="M4.6 5.2H12.8" stroke="#2fa78c" stroke-width="1.5"/><path d="M4.6 8.3H10.2" stroke="#8ed3c1" stroke-width="1.9"/><path d="M4.6 11.4H8.2" stroke="#2fa78c" stroke-width="1.5"/><circle cx="14.2" cy="15" r="3.7" stroke="#2a9d84" stroke-width="1.7"/><path d="M17 17.9L19.8 20.6" stroke="#2a9d84" stroke-width="1.8" stroke-linecap="round"/></svg></div><div class="ib i2"><span class="dou">豆</span></div><div class="ib i3"><span class="dd">当当</span></div><div class="ib i4"><span class="jd">京东</span></div><div class="ib i5"><span class="am">a</span><svg class="sm" width="17" height="6" viewBox="0 0 17 6" fill="none"><path d="M1 1.2C5 4.6 11 4.8 15.2 2" stroke="#6f9ad6" stroke-width="1.5" stroke-linecap="round"/><path d="M13.4 0.9L16 1.3L15 3.6" stroke="#6f9ad6" stroke-width="1.1" stroke-linecap="round"/></svg></div>
  <div class="step"><span class="mi">-</span><div class="qty">1</div><span class="pl">+</span></div>
  <div class="buy">订 购</div>
</div>
<div class="item" style="top:525px">
  <div class="cb"></div>
  <div class="cover c4"><svg width="90" height="125" viewBox="0 0 90 125"><defs><filter id="n4" x="0" y="0" width="100%" height="100%"><feTurbulence type="fractalNoise" baseFrequency="0.22" numOctaves="2" seed="3"/><feColorMatrix values="0 0 0 0 0.70  0 0 0 0 0.78  0 0 0 0 0.73  0 0 0 0.55 0"/></filter></defs><rect width="90" height="125" fill="#d9e3dc"/><rect width="90" height="125" filter="url(#n4)" opacity=".5"/><g transform="translate(-8 34) rotate(66) scale(0.9)"><path d="M0 0C-10 -1 -20 -8 -21 -20C-22 -32 -12 -42 0 -43C12 -42 22 -32 21 -20C20 -8 10 -1 0 0z" fill="#4f785b"/><path d="M-21 -11.4L-6 -8L-21 -6.6z" fill="#d3ddd6"/><path d="M-23 -20.8L-6 -15L-23 -15.2z" fill="#d3ddd6"/><path d="M-22 -30.8L-5 -22L-22 -25.2z" fill="#d3ddd6"/><path d="M-16 -40.4L-4 -29L-16 -35.6z" fill="#d3ddd6"/><path d="M21 -11.4L6 -8L21 -6.6z" fill="#d3ddd6"/><path d="M23 -20.8L6 -15L23 -15.2z" fill="#d3ddd6"/><path d="M22 -30.8L5 -22L22 -25.2z" fill="#d3ddd6"/><path d="M16 -40.4L4 -29L16 -35.6z" fill="#d3ddd6"/><path d="M0 0L0 -40" stroke="#8db19a" stroke-width="0.7"/></g><g transform="translate(95 119) rotate(-56) scale(1.0)"><path d="M0 0C-10 -1 -20 -8 -21 -20C-22 -32 -12 -42 0 -43C12 -42 22 -32 21 -20C20 -8 10 -1 0 0z" fill="#55795d"/><path d="M-21 -11.4L-6 -8L-21 -6.6z" fill="#d3ddd6"/><path d="M-23 -20.8L-6 -15L-23 -15.2z" fill="#d3ddd6"/><path d="M-22 -30.8L-5 -22L-22 -25.2z" fill="#d3ddd6"/><path d="M-16 -40.4L-4 -29L-16 -35.6z" fill="#d3ddd6"/><path d="M21 -11.4L6 -8L21 -6.6z" fill="#d3ddd6"/><path d="M23 -20.8L6 -15L23 -15.2z" fill="#d3ddd6"/><path d="M22 -30.8L5 -22L22 -25.2z" fill="#d3ddd6"/><path d="M16 -40.4L4 -29L16 -35.6z" fill="#d3ddd6"/><path d="M0 0L0 -40" stroke="#8db19a" stroke-width="0.7"/></g><g transform="translate(84 4) rotate(-104)"><path d="M0 0C4.6 -5.1 4.6 -12.8 0 -17C-4.6 -12.8 -4.6 -5.1 0 0z" fill="#2f6152"/><path d="M0 0V-17" stroke="#86ab9a" stroke-width="0.35"/></g><g transform="translate(85 5) rotate(170)"><path d="M0 0C4.2 -4.8 4.2 -12.0 0 -16C-4.2 -12.0 -4.2 -4.8 0 0z" fill="#2f6152"/><path d="M0 0V-16" stroke="#86ab9a" stroke-width="0.35"/></g><g transform="translate(86 3) rotate(125)"><path d="M0 0C4 -3.6 4 -9.0 0 -12C-4 -9.0 -4 -3.6 0 0z" fill="#3a6b58"/><path d="M0 0V-12" stroke="#86ab9a" stroke-width="0.35"/></g><g transform="translate(84 2) rotate(-40)"><path d="M0 0C3 -2.7 3 -6.8 0 -9C-3 -6.8 -3 -2.7 0 0z" fill="#356a58"/><path d="M0 0V-9" stroke="#86ab9a" stroke-width="0.35"/></g><g transform="translate(8 116) rotate(4)"><path d="M0 0C4.2 -4.2 4.2 -10.5 0 -14C-4.2 -10.5 -4.2 -4.2 0 0z" fill="#2f6355"/><path d="M0 0V-14" stroke="#86ab9a" stroke-width="0.35"/></g><g transform="translate(11 117) rotate(68)"><path d="M0 0C3.8 -3.9 3.8 -9.8 0 -13C-3.8 -9.8 -3.8 -3.9 0 0z" fill="#357060"/><path d="M0 0V-13" stroke="#86ab9a" stroke-width="0.35"/></g><g transform="translate(10 116) rotate(150)"><path d="M0 0C4 -3.9 4 -9.8 0 -13C-4 -9.8 -4 -3.9 0 0z" fill="#2b5b4e"/><path d="M0 0V-13" stroke="#86ab9a" stroke-width="0.35"/></g><g transform="translate(6 117) rotate(-130)"><path d="M0 0C3.8 -3.6 3.8 -9.0 0 -12C-3.8 -9.0 -3.8 -3.6 0 0z" fill="#2f6355"/><path d="M0 0V-12" stroke="#86ab9a" stroke-width="0.35"/></g><path d="M70 6C76 4 82 4 88 2" fill="none" stroke="#6d9080" stroke-width="0.4"/><rect x="9.5" y="25.5" width="71.3" height="38.4" fill="#fff" stroke="#b9c8bc" stroke-width="0.9"/><text x="46" y="45.7" font-size="14" font-weight="700" fill="#8fa090" letter-spacing="0.35" text-anchor="middle" font-family="Liberation Sans, Noto Sans CJK SC, sans-serif" >暂无封面</text><text x="46" y="55.7" font-size="5.5" font-weight="400" fill="#9dac9f" letter-spacing="0.75" text-anchor="middle" font-family="Liberation Sans, Noto Sans CJK SC, sans-serif" >NO COVER</text><rect x="31" y="4.7" width="29" height="1.4" fill="#b0c1b4"/><rect x="18.5" y="70.7" width="54" height="1.4" fill="#b0c1b4"/><rect x="31" y="76.8" width="28.6" height="1.4" fill="#b0c1b4"/><rect x="31" y="82.8" width="28.6" height="1.4" fill="#b0c1b4"/><rect x="28" y="88.4" width="35.6" height="1.4" fill="#b0c1b4"/><rect x="27" y="116.9" width="35.4" height="1.4" fill="#b0c1b4"/></svg></div>
  <div class="ti">4.你不可不知的十万个恐龙之谜</div>
  <div class="r r1" style="left:160px">责任者：禹田</div>
  <div class="r r1" style="left:747.5px">标准号：<span class="d">9787571513146</span></div>
  <div class="r r1" style="left:1335px">出版信息：云南晨光出版社有限责任公司 <span class="d">2022-03</span></div>
  <div class="r r2" style="left:160px">主题：</div>
  <div class="r r2" style="left:747.5px">中图分类：</div>
  <div class="r r2" style="left:1335px">价格：<span class="pr">￥<span class="d">25.80</span></span></div>
  <div class="r r3" style="left:160px">简介：昔日的王者，今朝的化石，书写了生命演化为辉煌的鸿篇巨制。它们就是中生代里的霸主，虽然经历了灭绝事件而消逝在岁月长河中，但至今仍令人念念不忘，探索兴致盎然。谁是恐龙的祖先？恐龙王国在什么时候达到...</div>
  <div class="ib i1"><svg width="21" height="21" viewBox="0 0 21 21" fill="none"><path d="M10 19.2H3.6A1.9 1.9 0 0 1 1.7 17.3V3.1A1.9 1.9 0 0 1 3.6 1.2H15.2A1.9 1.9 0 0 1 17.1 3.1V9.4" stroke="#62c3ab" stroke-width="1.7"/><path d="M4.6 5.2H12.8" stroke="#2fa78c" stroke-width="1.5"/><path d="M4.6 8.3H10.2" stroke="#8ed3c1" stroke-width="1.9"/><path d="M4.6 11.4H8.2" stroke="#2fa78c" stroke-width="1.5"/><circle cx="14.2" cy="15" r="3.7" stroke="#2a9d84" stroke-width="1.7"/><path d="M17 17.9L19.8 20.6" stroke="#2a9d84" stroke-width="1.8" stroke-linecap="round"/></svg></div><div class="ib i2"><span class="dou">豆</span></div><div class="ib i3"><span class="dd">当当</span></div><div class="ib i4"><span class="jd">京东</span></div><div class="ib i5"><span class="am">a</span><svg class="sm" width="17" height="6" viewBox="0 0 17 6" fill="none"><path d="M1 1.2C5 4.6 11 4.8 15.2 2" stroke="#6f9ad6" stroke-width="1.5" stroke-linecap="round"/><path d="M13.4 0.9L16 1.3L15 3.6" stroke="#6f9ad6" stroke-width="1.1" stroke-linecap="round"/></svg></div>
  <div class="step"><span class="mi">-</span><div class="qty">1</div><span class="pl">+</span></div>
  <div class="buy">订 购</div>
</div>
<div class="item" style="top:700px">
  <div class="cb"></div>
  <div class="cover c5"><svg width="90" height="125" viewBox="0 0 90 125"><rect width="90" height="125" fill="#5c6472"/><path d="M3.1 0.0L2.5 2.7L1.9 5.3L1.3 8.0L0.7 10.7L0.1 13.3L-0.6 16.0L-1.2 18.7L4.1 21.3L3.7 24.0L3.3 26.7L2.9 29.3L2.5 32.0L2.1 34.7L1.7 37.3L1.3 40.0L0.9 42.7L0.5 45.3L0.1 48.0L1.3 50.0L3.2 54.0L5.6 57.7L8.3 61.3L11.2 64.7L14.4 67.9L17.8 71.0L21.4 73.8L25.1 76.4L29.0 78.8L33.1 81.0L37.3 83.1L41.6 84.9L46.0 86.6L50.6 88.0L55.3 89.3L60.0 90.4L64.9 91.2L69.9 91.9L75.0 92.4L80.2 92.7L85.4 92.8" fill="none" stroke="#a9c0d6" stroke-width="0.35" opacity=".45"/><path d="M5.8 0.0L5.2 2.7L4.6 5.3L4.0 8.0L3.4 10.7L2.8 13.3L2.2 16.0L1.6 18.7L5.3 21.3L4.9 24.0L4.4 26.7L4.0 29.3L3.5 32.0L3.1 34.7L2.6 37.3L2.2 40.0L1.7 42.7L1.3 45.3L0.8 48.0L2.0 50.5L4.0 54.5L6.5 58.3L9.2 61.9L12.2 65.3L15.4 68.5L18.9 71.5L22.5 74.3L26.3 76.9L30.3 79.4L34.4 81.6L38.6 83.6L43.0 85.5L47.5 87.1L52.1 88.6L56.8 89.9L61.7 90.9L66.6 91.8L71.6 92.5L76.8 93.0L82.0 93.3L87.3 93.3" fill="none" stroke="#a9c0d6" stroke-width="0.35" opacity=".45"/><path d="M8.6 0.0L7.9 2.7L7.3 5.3L6.7 8.0L6.1 10.7L5.5 13.3L4.9 16.0L4.3 18.7L6.6 21.3L6.1 24.0L5.6 26.7L5.1 29.3L4.6 32.0L4.1 34.7L3.6 37.3L3.1 40.0L2.6 42.7L2.1 45.3L1.5 48.0L2.8 51.1L4.9 55.1L7.3 58.8L10.1 62.4L13.2 65.8L16.5 69.0L20.0 72.1L23.7 74.9L27.5 77.5L31.5 79.9L35.7 82.2L40.0 84.2L44.4 86.0L49.0 87.7L53.6 89.1L58.4 90.4L63.3 91.5L68.3 92.3L73.4 93.0L78.6 93.5L83.8 93.8L89.2 93.9" fill="none" stroke="#a9c0d6" stroke-width="0.35" opacity=".45"/><path d="M11.3 0.0L10.7 2.7L10.1 5.3L9.4 8.0L8.8 10.7L8.2 13.3L7.6 16.0L7.0 18.7L7.9 21.3L7.3 24.0L6.7 26.7L6.2 29.3L5.6 32.0L5.1 34.7L4.5 37.3L3.9 40.0L3.4 42.7L2.8 45.3L2.3 48.0L3.6 51.6L5.7 55.6L8.2 59.4L11.1 63.0L14.2 66.4L17.5 69.6L21.1 72.6L24.8 75.4L28.7 78.0L32.8 80.5L37.0 82.7L41.3 84.7L45.8 86.6L50.4 88.2L55.1 89.7L60.0 91.0L64.9 92.0L70.0 92.9L75.1 93.6L80.3 94.1L85.7 94.4L91.1 94.5" fill="none" stroke="#a9c0d6" stroke-width="0.35" opacity=".45"/><path d="M14.0 0.0L13.4 2.7L12.8 5.3L12.2 8.0L11.6 10.7L10.9 13.3L10.3 16.0L9.7 18.7L9.1 21.3L8.5 24.0L7.9 26.7L7.3 29.3L6.7 32.0L6.1 34.7L5.4 37.3L4.8 40.0L4.2 42.7L3.6 45.3L3.0 48.0L4.4 52.2L6.5 56.2L9.1 59.9L12.0 63.5L15.2 66.9L18.6 70.1L22.2 73.2L26.0 76.0L29.9 78.6L34.0 81.0L38.3 83.2L42.7 85.3L47.2 87.1L51.9 88.8L56.7 90.2L61.6 91.5L66.5 92.6L71.6 93.4L76.8 94.1L82.1 94.6L87.5 94.9L93.0 95.0" fill="none" stroke="#a9c0d6" stroke-width="0.35" opacity=".45"/><path d="M16.7 0.0L16.1 2.7L15.5 5.3L14.9 8.0L14.3 10.7L13.7 13.3L13.1 16.0L12.4 18.7L10.4 21.3L9.7 24.0L9.0 26.7L8.4 29.3L7.7 32.0L7.0 34.7L6.4 37.3L5.7 40.0L5.1 42.7L4.4 45.3L3.7 48.0L5.2 52.7L7.4 56.7L10.0 60.5L12.9 64.1L16.2 67.5L19.6 70.7L23.3 73.7L27.1 76.5L31.1 79.1L35.3 81.6L39.6 83.8L44.1 85.8L48.7 87.7L53.4 89.3L58.2 90.8L63.1 92.1L68.2 93.1L73.3 94.0L78.6 94.7L83.9 95.2L89.4 95.5L94.9 95.5" fill="none" stroke="#a9c0d6" stroke-width="0.35" opacity=".45"/><path d="M19.4 0.0L18.8 2.7L18.2 5.3L17.6 8.0L17.0 10.7L16.4 13.3L15.8 16.0L15.2 18.7L11.6 21.3L10.9 24.0L10.2 26.7L9.5 29.3L8.8 32.0L8.0 34.7L7.3 37.3L6.6 40.0L5.9 42.7L5.2 45.3L4.5 48.0L5.9 53.3L8.2 57.3L10.9 61.0L13.9 64.6L17.2 68.0L20.7 71.2L24.4 74.3L28.3 77.1L32.3 79.7L36.6 82.1L40.9 84.3L45.4 86.4L50.1 88.2L54.8 89.9L59.7 91.3L64.7 92.6L69.8 93.7L75.0 94.5L80.3 95.2L85.7 95.7L91.2 96.0L96.8 96.1" fill="none" stroke="#a9c0d6" stroke-width="0.35" opacity=".45"/><path d="M22.2 0.0L21.6 2.7L20.9 5.3L20.3 8.0L19.7 10.7L19.1 13.3L18.5 16.0L17.9 18.7L12.9 21.3L12.1 24.0L11.3 26.7L10.6 29.3L9.8 32.0L9.0 34.7L8.3 37.3L7.5 40.0L6.7 42.7L5.9 45.3L5.2 48.0L6.7 53.8L9.0 57.8L11.8 61.6L14.8 65.2L18.2 68.6L21.7 71.8L25.5 74.8L29.4 77.6L33.5 80.2L37.8 82.7L42.2 84.9L46.8 86.9L51.5 88.8L56.3 90.4L61.2 91.9L66.3 93.2L71.4 94.2L76.7 95.1L82.0 95.8L87.5 96.3L93.0 96.6L98.7 96.7" fill="none" stroke="#a9c0d6" stroke-width="0.35" opacity=".45"/><path d="M24.9 0.0L24.3 2.7L23.7 5.3L23.1 8.0L22.4 10.7L21.8 13.3L21.2 16.0L20.6 18.7L14.1 21.3L13.3 24.0L12.5 26.7L11.7 29.3L10.8 32.0L10.0 34.7L9.2 37.3L8.4 40.0L7.5 42.7L6.7 45.3L5.9 48.0L7.5 54.4L9.9 58.4L12.6 62.1L15.8 65.7L19.1 69.1L22.8 72.3L26.6 75.4L30.6 78.2L34.7 80.8L39.1 83.2L43.5 85.5L48.2 87.5L52.9 89.3L57.8 91.0L62.7 92.4L67.8 93.7L73.0 94.8L78.4 95.6L83.8 96.3L89.3 96.8L94.9 97.1L100.6 97.2" fill="none" stroke="#a9c0d6" stroke-width="0.35" opacity=".45"/><g fill="#b5cde3" opacity=".8"><circle cx="8.0" cy="36.0" r="0.25"/><circle cx="59.7" cy="91.4" r="0.3"/><circle cx="11.8" cy="4.3" r="0.25"/><circle cx="14.7" cy="64.2" r="0.3"/><circle cx="22.2" cy="73.6" r="0.5"/><circle cx="13.7" cy="7.9" r="0.3"/><circle cx="7.7" cy="31.4" r="0.35"/><circle cx="12.9" cy="64.5" r="0.3"/><circle cx="4.2" cy="39.6" r="0.25"/><circle cx="18.3" cy="72.5" r="0.35"/><circle cx="5.1" cy="50.2" r="0.3"/><circle cx="50.1" cy="87.1" r="0.35"/><circle cx="11.4" cy="58.7" r="0.35"/><circle cx="22.4" cy="71.9" r="0.3"/><circle cx="46.1" cy="87.5" r="0.25"/><circle cx="89.4" cy="96.1" r="0.35"/><circle cx="4.2" cy="37.4" r="0.5"/><circle cx="14.8" cy="8.3" r="0.25"/><circle cx="10.9" cy="3.6" r="0.5"/><circle cx="4.3" cy="31.7" r="0.25"/><circle cx="76.7" cy="96.9" r="0.5"/><circle cx="12.8" cy="5.2" r="0.3"/><circle cx="6.2" cy="41.8" r="0.3"/><circle cx="-0.1" cy="47.4" r="0.5"/><circle cx="63.7" cy="94.2" r="0.35"/><circle cx="29.7" cy="80.1" r="0.25"/><circle cx="10.0" cy="20.3" r="0.5"/><circle cx="59.0" cy="92.0" r="0.3"/><circle cx="2.2" cy="45.6" r="0.3"/><circle cx="28.6" cy="79.9" r="0.25"/><circle cx="6.0" cy="47.5" r="0.5"/><circle cx="2.6" cy="43.2" r="0.5"/><circle cx="14.8" cy="7.2" r="0.3"/><circle cx="9.9" cy="11.2" r="0.3"/><circle cx="13.1" cy="61.2" r="0.25"/><circle cx="64.8" cy="91.8" r="0.35"/><circle cx="79.6" cy="93.1" r="0.25"/><circle cx="65.4" cy="91.4" r="0.5"/><circle cx="8.7" cy="34.9" r="0.35"/><circle cx="3.9" cy="51.7" r="0.3"/><circle cx="80.1" cy="94.4" r="0.25"/><circle cx="42.8" cy="88.3" r="0.25"/><circle cx="33.2" cy="82.1" r="0.3"/><circle cx="5.7" cy="39.3" r="0.35"/><circle cx="20.5" cy="72.9" r="0.3"/><circle cx="55.4" cy="86.4" r="0.3"/><circle cx="3.0" cy="21.5" r="0.25"/><circle cx="47.9" cy="88.4" r="0.35"/><circle cx="7.5" cy="46.7" r="0.35"/><circle cx="15.5" cy="10.0" r="0.35"/><circle cx="3.2" cy="18.6" r="0.25"/><circle cx="2.9" cy="51.5" r="0.25"/><circle cx="61.1" cy="92.1" r="0.3"/><circle cx="6.0" cy="54.2" r="0.35"/><circle cx="17.6" cy="8.1" r="0.5"/><circle cx="7.0" cy="42.3" r="0.3"/><circle cx="97.2" cy="95.5" r="0.5"/><circle cx="57.0" cy="91.9" r="0.5"/><circle cx="25.1" cy="78.2" r="0.3"/><circle cx="15.3" cy="-0.9" r="0.25"/><circle cx="11.2" cy="59.7" r="0.3"/><circle cx="57.5" cy="91.7" r="0.35"/><circle cx="6.8" cy="55.4" r="0.5"/><circle cx="63.8" cy="91.9" r="0.5"/><circle cx="29.2" cy="75.7" r="0.3"/><circle cx="9.5" cy="60.9" r="0.5"/><circle cx="43.2" cy="85.3" r="0.3"/><circle cx="3.8" cy="18.9" r="0.25"/><circle cx="3.2" cy="34.6" r="0.25"/><circle cx="70.5" cy="93.4" r="0.25"/><circle cx="42.6" cy="86.8" r="0.25"/><circle cx="1.7" cy="46.6" r="0.3"/><circle cx="29.5" cy="80.9" r="0.5"/><circle cx="7.3" cy="58.6" r="0.35"/><circle cx="78.5" cy="93.2" r="0.5"/><circle cx="13.6" cy="16.2" r="0.25"/><circle cx="27.6" cy="78.6" r="0.35"/><circle cx="50.4" cy="87.1" r="0.35"/><circle cx="17.9" cy="11.6" r="0.3"/><circle cx="47.4" cy="87.0" r="0.3"/><circle cx="92.0" cy="93.8" r="0.5"/><circle cx="88.0" cy="96.4" r="0.35"/><circle cx="6.1" cy="33.7" r="0.5"/><circle cx="4.7" cy="47.1" r="0.35"/><circle cx="12.8" cy="59.2" r="0.3"/><circle cx="89.4" cy="96.0" r="0.25"/><circle cx="75.6" cy="96.9" r="0.5"/><circle cx="57.6" cy="87.2" r="0.5"/><circle cx="14.7" cy="14.6" r="0.35"/><circle cx="17.2" cy="10.7" r="0.5"/><circle cx="70.6" cy="93.7" r="0.25"/><circle cx="57.9" cy="90.7" r="0.25"/><circle cx="7.8" cy="28.4" r="0.5"/><circle cx="77.0" cy="95.3" r="0.3"/><circle cx="82.7" cy="94.1" r="0.3"/><circle cx="7.8" cy="23.2" r="0.3"/><circle cx="5.4" cy="30.9" r="0.35"/><circle cx="53.5" cy="89.0" r="0.25"/><circle cx="37.9" cy="83.6" r="0.5"/><circle cx="2.7" cy="27.2" r="0.5"/><circle cx="21.7" cy="75.8" r="0.35"/><circle cx="34.5" cy="79.7" r="0.3"/><circle cx="3.8" cy="43.4" r="0.3"/><circle cx="8.1" cy="-1.5" r="0.5"/><circle cx="16.3" cy="19.4" r="0.35"/><circle cx="18.2" cy="69.6" r="0.3"/><circle cx="7.3" cy="17.3" r="0.35"/><circle cx="84.0" cy="94.4" r="0.35"/><circle cx="10.1" cy="25.0" r="0.25"/><circle cx="3.2" cy="52.1" r="0.25"/><circle cx="12.6" cy="8.6" r="0.25"/><circle cx="3.6" cy="43.4" r="0.25"/><circle cx="12.9" cy="67.9" r="0.5"/><circle cx="44.6" cy="84.4" r="0.35"/><circle cx="37.6" cy="82.8" r="0.5"/><circle cx="40.5" cy="83.2" r="0.25"/><circle cx="50.6" cy="88.3" r="0.3"/><circle cx="17.1" cy="9.9" r="0.25"/><circle cx="4.2" cy="40.3" r="0.25"/><circle cx="21.1" cy="71.9" r="0.25"/><circle cx="6.7" cy="50.1" r="0.25"/><circle cx="31.4" cy="77.9" r="0.35"/><circle cx="55.1" cy="88.2" r="0.3"/><circle cx="5.9" cy="22.7" r="0.5"/><circle cx="14.8" cy="7.3" r="0.25"/><circle cx="20.4" cy="71.8" r="0.3"/><circle cx="3.9" cy="33.9" r="0.3"/><circle cx="16.5" cy="1.9" r="0.25"/><circle cx="31.7" cy="79.1" r="0.35"/><circle cx="2.9" cy="50.6" r="0.3"/><circle cx="8.6" cy="34.0" r="0.35"/><circle cx="5.2" cy="47.4" r="0.5"/><circle cx="84.4" cy="98.4" r="0.3"/><circle cx="17.5" cy="9.8" r="0.35"/><circle cx="87.8" cy="97.8" r="0.35"/><circle cx="68.2" cy="91.6" r="0.5"/><circle cx="6.9" cy="44.2" r="0.5"/><circle cx="3.8" cy="42.2" r="0.5"/><circle cx="6.3" cy="33.7" r="0.35"/><circle cx="65.3" cy="94.0" r="0.25"/><circle cx="71.0" cy="95.5" r="0.5"/><circle cx="5.0" cy="41.3" r="0.5"/><circle cx="45.3" cy="84.6" r="0.25"/><circle cx="56.7" cy="95.2" r="0.3"/><circle cx="83.3" cy="95.7" r="0.35"/><circle cx="48.4" cy="88.0" r="0.5"/><circle cx="79.0" cy="92.8" r="0.25"/><circle cx="12.3" cy="3.0" r="0.3"/><circle cx="24.9" cy="75.8" r="0.3"/><circle cx="7.2" cy="19.1" r="0.35"/><circle cx="43.1" cy="84.2" r="0.3"/><circle cx="4.4" cy="31.6" r="0.3"/><circle cx="27.6" cy="76.0" r="0.5"/><circle cx="10.2" cy="63.9" r="0.5"/><circle cx="2.3" cy="45.4" r="0.3"/><circle cx="7.0" cy="36.9" r="0.35"/><circle cx="53.9" cy="89.7" r="0.5"/><circle cx="4.6" cy="40.1" r="0.35"/><circle cx="7.3" cy="36.4" r="0.35"/><circle cx="5.6" cy="13.4" r="0.3"/><circle cx="14.7" cy="8.6" r="0.5"/><circle cx="2.3" cy="47.6" r="0.25"/><circle cx="5.1" cy="15.2" r="0.5"/><circle cx="84.4" cy="94.9" r="0.5"/><circle cx="86.9" cy="96.0" r="0.3"/><circle cx="12.1" cy="16.0" r="0.5"/><circle cx="12.0" cy="9.0" r="0.3"/><circle cx="13.1" cy="23.4" r="0.35"/><circle cx="81.2" cy="92.8" r="0.5"/><circle cx="34.6" cy="81.3" r="0.3"/><circle cx="4.9" cy="42.8" r="0.25"/><circle cx="12.2" cy="61.7" r="0.35"/><circle cx="27.3" cy="74.3" r="0.3"/><circle cx="13.8" cy="63.3" r="0.35"/><circle cx="15.4" cy="10.0" r="0.5"/><circle cx="12.6" cy="10.8" r="0.35"/><circle cx="11.8" cy="24.6" r="0.5"/><circle cx="5.0" cy="38.7" r="0.35"/><circle cx="38.7" cy="84.4" r="0.3"/><circle cx="7.1" cy="32.4" r="0.3"/><circle cx="8.5" cy="27.8" r="0.5"/><circle cx="22.2" cy="70.5" r="0.25"/><circle cx="84.4" cy="96.4" r="0.3"/><circle cx="10.2" cy="1.3" r="0.25"/><circle cx="3.8" cy="20.7" r="0.35"/><circle cx="46.6" cy="83.8" r="0.35"/><circle cx="6.7" cy="18.3" r="0.5"/><circle cx="11.3" cy="1.7" r="0.35"/><circle cx="87.8" cy="95.4" r="0.25"/><circle cx="3.5" cy="32.5" r="0.25"/><circle cx="13.5" cy="63.9" r="0.35"/><circle cx="55.1" cy="90.3" r="0.5"/><circle cx="5.2" cy="20.3" r="0.35"/><circle cx="5.5" cy="38.7" r="0.5"/><circle cx="5.2" cy="24.9" r="0.5"/><circle cx="21.0" cy="5.5" r="0.35"/><circle cx="14.0" cy="21.9" r="0.35"/><circle cx="10.7" cy="28.5" r="0.35"/><circle cx="39.5" cy="81.4" r="0.35"/><circle cx="14.2" cy="-4.3" r="0.25"/><circle cx="13.8" cy="4.9" r="0.5"/><circle cx="80.6" cy="95.8" r="0.5"/><circle cx="57.4" cy="91.3" r="0.25"/><circle cx="51.9" cy="85.5" r="0.3"/><circle cx="18.6" cy="72.1" r="0.35"/><circle cx="45.6" cy="86.5" r="0.5"/><circle cx="43.2" cy="86.1" r="0.25"/><circle cx="3.9" cy="53.1" r="0.5"/><circle cx="71.2" cy="92.8" r="0.25"/><circle cx="-1.1" cy="25.2" r="0.5"/><circle cx="12.6" cy="20.2" r="0.3"/><circle cx="45.0" cy="83.1" r="0.25"/><circle cx="47.4" cy="88.9" r="0.35"/><circle cx="4.8" cy="39.1" r="0.3"/><circle cx="9.7" cy="21.5" r="0.3"/><circle cx="0.5" cy="37.1" r="0.3"/><circle cx="28.3" cy="76.9" r="0.25"/><circle cx="4.6" cy="11.5" r="0.5"/><circle cx="77.8" cy="94.3" r="0.25"/><circle cx="7.0" cy="3.1" r="0.3"/><circle cx="72.4" cy="97.4" r="0.5"/><circle cx="19.6" cy="68.6" r="0.25"/><circle cx="7.1" cy="9.6" r="0.3"/><circle cx="12.5" cy="4.5" r="0.35"/><circle cx="12.1" cy="-0.5" r="0.25"/><circle cx="52.7" cy="90.9" r="0.35"/><circle cx="16.5" cy="8.8" r="0.5"/><circle cx="15.5" cy="8.0" r="0.3"/><circle cx="25.6" cy="75.2" r="0.35"/><circle cx="3.7" cy="44.5" r="0.25"/><circle cx="4.4" cy="32.8" r="0.5"/><circle cx="14.3" cy="-1.8" r="0.3"/><circle cx="0.7" cy="43.1" r="0.5"/><circle cx="65.6" cy="95.3" r="0.5"/><circle cx="13.0" cy="68.9" r="0.3"/><circle cx="8.5" cy="0.6" r="0.5"/><circle cx="9.2" cy="8.1" r="0.3"/><circle cx="9.5" cy="18.0" r="0.25"/><circle cx="4.5" cy="11.8" r="0.3"/><circle cx="7.0" cy="31.8" r="0.5"/></g><path d="M17.0 86.0V125" stroke="#9db2c6" stroke-width="0.3" opacity=".4"/><path d="M18.9 86.6V125" stroke="#9db2c6" stroke-width="0.3" opacity=".4"/><path d="M20.8 87.2V125" stroke="#9db2c6" stroke-width="0.3" opacity=".4"/><path d="M22.7 87.8V125" stroke="#9db2c6" stroke-width="0.3" opacity=".4"/><path d="M24.6 88.4V125" stroke="#9db2c6" stroke-width="0.3" opacity=".4"/><path d="M26.5 89.0V125" stroke="#9db2c6" stroke-width="0.3" opacity=".4"/><path d="M28.4 89.6V125" stroke="#9db2c6" stroke-width="0.3" opacity=".4"/><path d="M30.3 90.2V125" stroke="#9db2c6" stroke-width="0.3" opacity=".4"/><path d="M32.2 90.8V125" stroke="#9db2c6" stroke-width="0.3" opacity=".4"/><path d="M34.1 91.4V125" stroke="#9db2c6" stroke-width="0.3" opacity=".4"/><text x="46" y="45.7" font-size="14" font-weight="700" fill="#a6acb5" letter-spacing="0.35" text-anchor="middle" font-family="Liberation Sans, Noto Sans CJK SC, sans-serif" >暂无封面</text><text x="46" y="55.7" font-size="5.5" font-weight="700" fill="#a1a8b2" letter-spacing="0.75" text-anchor="middle" font-family="Liberation Sans, Noto Sans CJK SC, sans-serif" >NO COVER</text></svg></div>
  <div class="ti">5.你不可不知的十万个兵器之谜</div>
  <div class="r r1" style="left:160px">责任者：禹田</div>
  <div class="r r1" style="left:747.5px">标准号：<span class="d">9787571513191</span></div>
  <div class="r r1" style="left:1335px">出版信息：云南晨光出版社有限责任公司 <span class="d">2022-03</span></div>
  <div class="r r2" style="left:160px">主题：</div>
  <div class="r r2" style="left:747.5px">中图分类：</div>
  <div class="r r2" style="left:1335px">价格：<span class="pr">￥<span class="d">25.80</span></span></div>
  <div class="r r3" style="left:160px">简介：</div>
  <div class="ib i1"><svg width="21" height="21" viewBox="0 0 21 21" fill="none"><path d="M10 19.2H3.6A1.9 1.9 0 0 1 1.7 17.3V3.1A1.9 1.9 0 0 1 3.6 1.2H15.2A1.9 1.9 0 0 1 17.1 3.1V9.4" stroke="#62c3ab" stroke-width="1.7"/><path d="M4.6 5.2H12.8" stroke="#2fa78c" stroke-width="1.5"/><path d="M4.6 8.3H10.2" stroke="#8ed3c1" stroke-width="1.9"/><path d="M4.6 11.4H8.2" stroke="#2fa78c" stroke-width="1.5"/><circle cx="14.2" cy="15" r="3.7" stroke="#2a9d84" stroke-width="1.7"/><path d="M17 17.9L19.8 20.6" stroke="#2a9d84" stroke-width="1.8" stroke-linecap="round"/></svg></div><div class="ib i2"><span class="dou">豆</span></div><div class="ib i3"><span class="dd">当当</span></div><div class="ib i4"><span class="jd">京东</span></div><div class="ib i5"><span class="am">a</span><svg class="sm" width="17" height="6" viewBox="0 0 17 6" fill="none"><path d="M1 1.2C5 4.6 11 4.8 15.2 2" stroke="#6f9ad6" stroke-width="1.5" stroke-linecap="round"/><path d="M13.4 0.9L16 1.3L15 3.6" stroke="#6f9ad6" stroke-width="1.1" stroke-linecap="round"/></svg></div>
  <div class="step"><span class="mi">-</span><div class="qty">1</div><span class="pl">+</span></div>
  <div class="buy">订 购</div>
</div>
</div>
<!--/LIST-->

<!--BOTTOM-->
<!-- scrollbar -->
<svg class="abs" style="left:2535px;top:316px" width="10" height="7" viewBox="0 0 10 7"><path d="M0.4 6.2L4.7 0.8L9 6.2z" fill="#666"/></svg>
<div id="sthumb"></div>
<div id="bshadow"></div>
<svg class="abs" style="left:2535px;top:1120px" width="10" height="7" viewBox="0 0 10 7"><path d="M0.4 0.8L4.7 6.2L9 0.8z" fill="#8a8a8a"/></svg>
<!-- floating side handle -->
<div class="abs" style="left:0;top:1020px;width:10px;height:36px;background:#fff;box-shadow:0 0 4px rgba(0,0,0,.07)"></div>
<svg class="abs" style="left:0;top:1031px" width="6" height="17" viewBox="0 0 6 17"><defs><linearGradient id="hg" x1="0" y1="0" x2="1" y2="0"><stop offset="0" stop-color="#9a9a9a"/><stop offset=".45" stop-color="#555"/><stop offset="1" stop-color="#2f2f2f"/></linearGradient></defs><path d="M0 1.4C2.6 2.6 4.6 5.6 4.6 8.4C4.6 11.6 2.4 13.8 0 14.6z" fill="url(#hg)"/></svg>
<div id="bot">
  <div class="cb2"></div>
  <span class="t" style="left:43px">全选当前页</span>
  <svg class="abs" style="left:142px;top:19px" width="13" height="9" viewBox="0 0 13 9"><path d="M1 1.2L6.5 7L12 1.2" fill="none" stroke="#333" stroke-width="1.3"/></svg>
  <span class="t" style="left:2190px">已选择0条数据</span>
  <div id="dup">查 重</div>
  <div id="order"><span>订购</span>
    <div class="abs" style="left:60.5px;top:9.5px;width:1.5px;height:15px;background:#e6f6f2"></div>
    <svg class="abs" style="left:70px;top:12.5px" width="16" height="10" viewBox="0 0 16 10"><path d="M1.2 1.2L8 8L14.8 1.2" fill="none" stroke="#fff" stroke-width="1.8"/></svg>
  </div>
</div>
<!--/BOTTOM-->

</body>
</html>
